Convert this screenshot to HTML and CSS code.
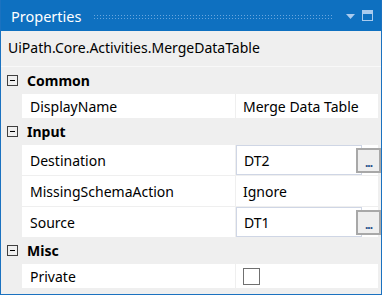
FILE: index.html
```html
<!DOCTYPE html>
<html lang="en">
<head>
    <meta charset="UTF-8">
    <title>Properties</title>
    <link rel="stylesheet" href="styles.css">
</head>
<body>
    <div class="panel">
        <div class="titlebar">
            <span class="title">Properties</span>
            <span class="grip"></span>
            <svg class="pin" width="10" height="6" viewBox="0 0 10 6"><path d="M0 0H9L4.5 5Z" fill="#a9cbee"/></svg>
            <svg class="maxbtn" width="11" height="11" viewBox="0 0 11 11"><rect x="0.5" y="0.5" width="10" height="10" fill="none" stroke="#a9cbee"/><rect x="1" y="1" width="9" height="3" fill="#a9cbee"/></svg>
        </div>
        <div class="typename">UiPath.Core.Activities.MergeDataTable</div>
        <div class="grid">
            <div class="category"><span class="toggle"></span>Common</div>
            <div class="row">
                <div class="name">DisplayName</div>
                <div class="value">Merge Data Table</div>
            </div>

            <div class="category"><span class="toggle"></span>Input</div>
            <div class="row tall">
                <div class="name">Destination</div>
                <div class="value"><span class="textbox">DT2</span><span class="dots">...</span></div>
            </div>
            <div class="row tall">
                <div class="name">MissingSchemaAction</div>
                <div class="value">Ignore</div>
            </div>
            <div class="row tall">
                <div class="name">Source</div>
                <div class="value"><span class="textbox">DT1</span><span class="dots">...</span></div>
            </div>

            <div class="category"><span class="toggle"></span>Misc</div>
            <div class="row">
                <div class="name">Private</div>
                <div class="value"><span class="check"></span></div>
            </div>
        </div>
    </div>
</body>
</html>
```

FILE: styles.css
```css
body {
    margin: 0;
    background: #ffffff;
    font-family: 'Noto Sans', 'Open Sans', sans-serif;
    font-size: 14px;
    color: #000;
}

.panel {
    width: 382px;
    height: 295px;
    background: #efefef;
    border: 1px solid #1b72c0;
    border-top: none;
    box-sizing: border-box;
    display: flex;
    flex-direction: column;
}

.titlebar {
    height: 31px;
    background: #0e70c0;
    display: flex;
    align-items: center;
    padding: 0 8px 0 10px;
    color: #fff;
}

.title {
    font-size: 14.5px;
}

.grip {
    flex: 1;
    height: 5px;
    margin: 2px 14px 0 12px;
    background-image: radial-gradient(circle, #6aa6de 0.8px, transparent 1px);
    background-size: 3px 3px;
}

.pin {
    margin: 3px 6px 0 0;
}

.typename {
    height: 35px;
    line-height: 33px;
    padding-left: 7px;
    border-bottom: 1px solid #f8f8f8;
}

.grid {
    display: flex;
    flex-direction: column;
    gap: 1px;
    margin-top: 1px;
    margin-right: 3px;
}

.category {
    height: 25px;
    display: flex;
    align-items: center;
    font-weight: bold;
    padding-left: 6px;
}

.toggle {
    width: 9px;
    height: 9px;
    border: 1px solid #404040;
    margin-right: 9px;
    position: relative;
}

.toggle::after {
    content: "";
    position: absolute;
    left: 2px;
    top: 4px;
    width: 5px;
    height: 1px;
    background: #000;
}

.row {
    height: 24px;
    margin-left: 21px;
    display: grid;
    grid-template-columns: 213px 1fr;
    gap: 1px;
}

.row.tall {
    height: 30px;
}

.name, .value {
    background: #fff;
    display: flex;
    align-items: center;
}

.name {
    padding-left: 8px;
}

.value {
    padding-left: 7px;
    position: relative;
}

.textbox {
    position: absolute;
    left: 0;
    top: 0;
    bottom: 0;
    width: 117px;
    border: 1px solid #cfd6e5;
    display: flex;
    align-items: center;
    padding-left: 7px;
}

.dots {
    position: absolute;
    right: -3px;
    top: 3px;
    width: 21px;
    height: 21px;
    border: 2px solid #a8a8a8;
    background: #eeeeee;
    font-size: 12px;
    font-weight: bold;
    color: #1f4f8a;
    display: flex;
    align-items: flex-end;
    justify-content: center;
    line-height: 17px;
    letter-spacing: -1px;
}

.check {
    width: 15px;
    height: 15px;
    border: 1px solid #707070;
    background: #fff;
}
```
